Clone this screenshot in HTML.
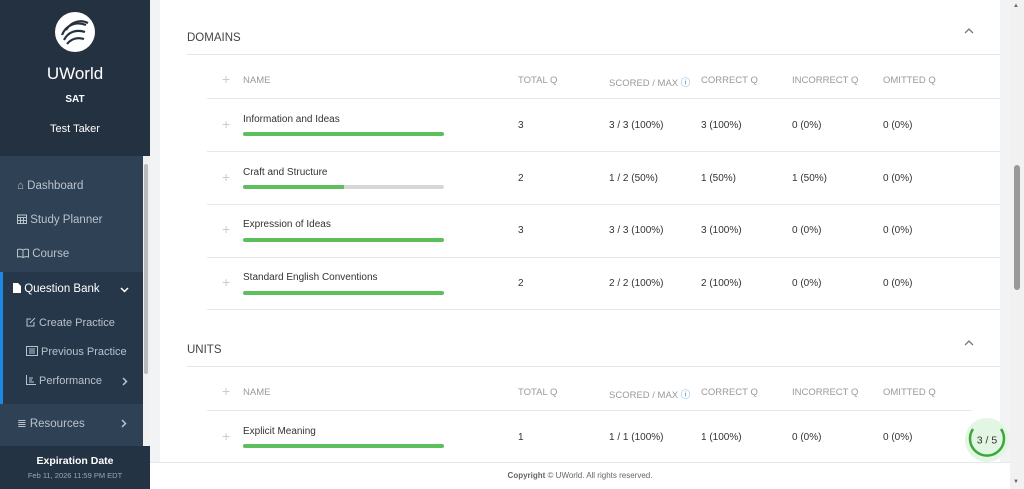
<!DOCTYPE html>
<html><head><meta charset="utf-8"><style>
*{margin:0;padding:0;box-sizing:border-box}
body{width:1024px;height:489px;overflow:hidden;font-family:"Liberation Sans",sans-serif;background:#f2f3f5;position:relative}
.sb{position:absolute;left:0;top:0;width:150px;height:489px;background:#2c3e50}
.sbtop{position:absolute;left:0;top:0;width:150px;height:156px;background:#233140;text-align:center;color:#fff}
.nav{position:absolute;left:0;top:156px;width:150px;height:290px;background:#2f4154}
.nav .it{position:absolute;left:17px;color:#b9c3cc;font-size:11.5px}
.qb{position:absolute;left:0;top:272px;width:143px;height:132px;background:#26374a;border-left:3px solid #1e88e5}
.sbs{position:absolute;left:143px;top:156px;width:7px;height:290px;background:#f0f0f0}
.sbbot{position:absolute;left:0;top:446px;width:150px;height:43px;background:#243344;text-align:center;color:#fff}
.card{position:absolute;left:160px;top:0;width:840px;height:462px;background:#fff}
.foot{position:absolute;left:150px;top:462px;width:860px;height:27px;background:#fff;border-top:1px solid #e6e8eb;font-size:8px;color:#666;text-align:center;line-height:26px}
.scr{position:absolute;left:1010px;top:0;width:14px;height:489px;background:#f1f1f1}
.t{position:absolute;font-size:10px;color:#333}
.h{position:absolute;font-size:9.5px;color:#999}
.ln{position:absolute;height:1px;background:#e8e8e8}
.bar{position:absolute;left:243px;width:201px;height:4px;border-radius:2px;background:#d6d6d6;overflow:hidden}
.bar i{display:block;height:100%;background:#5cbf5c}
.pl{position:absolute;left:222px;font-size:14px;color:#ccc;font-weight:300}
.sec{position:absolute;left:187px;font-size:11.5px;color:#444}
.car{position:absolute;left:964px}
.chev{position:absolute}
</style></head><body>
<div class="sb">
 <div class="sbtop">
  <svg style="position:absolute;left:54px;top:11px" width="42" height="42" viewBox="0 0 42 42"><circle cx="21" cy="21" r="20" fill="#fff"/><path d="M8 24c4-10 14-14 24-10M10 29c4-8 12-11 21-8M13 33c4-5 10-7 17-5M12 19c5-8 14-11 22-7" stroke="#233140" stroke-width="2.2" fill="none"/></svg>
  <div style="position:absolute;top:64px;width:150px;font-size:17px">UWorld</div>
  <div style="position:absolute;top:94px;width:150px;font-size:10px;font-weight:bold">SAT</div>
  <div style="position:absolute;top:123px;width:150px;font-size:11px">Test Taker</div>
 </div>
 <div class="nav">
  <div class="it" style="top:24px">⌂ Dashboard</div>
  <div class="it" style="top:58px"><svg width="10" height="10" viewBox="0 0 10 10" style="vertical-align:-1px"><rect x=".5" y="1" width="9" height="8.5" fill="none" stroke="#b9c3cc"/><path d="M.5 3.5h9M3.5 3.5v6M6.5 3.5v6M.5 6.5h9" stroke="#b9c3cc"/></svg> Study Planner</div>
  <div class="it" style="top:92px"><svg width="12" height="10" viewBox="0 0 12 10" style="vertical-align:-1px"><path d="M6 2C4 1 2 1 .5 1.5v7.5C2 8.5 4 8.5 6 9.5 8 8.5 10 8.5 11.5 9V1.5C10 1 8 1 6 2zM6 2v7.5" stroke="#b9c3cc" fill="none"/></svg> Course</div>
 </div>
 <div class="qb">
  <div style="position:absolute;left:10px;top:11px;color:#fff;font-size:11.5px"><svg width="8" height="10" viewBox="0 0 8 10" style="vertical-align:-1px"><path d="M0 0h5l3 3v7H0z" fill="#fff"/></svg> Question Bank</div>
  <svg class="chev" style="left:117px;top:15px" width="9" height="6" viewBox="0 0 9 6"><path d="M1 1l3.5 3.5L8 1" stroke="#fff" stroke-width="1.5" fill="none"/></svg>
  <div style="position:absolute;left:23px;top:45px;color:#b9c3cc;font-size:11px"><svg width="10" height="10" viewBox="0 0 10 10" style="vertical-align:-1px"><path d="M8 5v4H1V2h4M4 6l5-5" stroke="#b9c3cc" fill="none"/></svg> Create Practice</div>
  <div style="position:absolute;left:23px;top:74px;color:#b9c3cc;font-size:11px"><svg width="12" height="10" viewBox="0 0 12 10" style="vertical-align:-1px"><rect x=".5" y=".5" width="11" height="9" fill="none" stroke="#b9c3cc"/><path d="M3 3h6M3 5h6M3 7h6" stroke="#b9c3cc"/></svg> Previous Practice</div>
  <div style="position:absolute;left:23px;top:103px;color:#b9c3cc;font-size:11px"><svg width="10" height="10" viewBox="0 0 10 10" style="vertical-align:-1px"><path d="M.5 0v9.5H10M3 3h4M3 5h3M3 7h5" stroke="#b9c3cc" fill="none"/></svg> Performance</div>
  <svg class="chev" style="left:119px;top:105px" width="6" height="9" viewBox="0 0 6 9"><path d="M1 1l3.5 3.5L1 8" stroke="#b9c3cc" stroke-width="1.5" fill="none"/></svg>
 </div>
 <div style="position:absolute;left:17px;top:416px;color:#b9c3cc;font-size:11.5px">≣ Resources</div>
 <svg class="chev" style="left:121px;top:419px" width="6" height="9" viewBox="0 0 6 9"><path d="M1 1l3.5 3.5L1 8" stroke="#b9c3cc" stroke-width="1.5" fill="none"/></svg>
 <div class="sbs"><div style="position:absolute;left:1px;top:8px;width:4px;height:210px;background:#bbb;border-radius:2px"></div></div>
 <div class="sbbot">
  <div style="position:absolute;top:9px;width:150px;font-size:10.5px;font-weight:bold">Expiration Date</div>
  <div style="position:absolute;top:25px;width:150px;font-size:7.5px;color:#9aa6b2">Feb 11, 2026 11:59 PM EDT</div>
 </div>
</div>
<div class="card"></div>
<div class="sec" style="top:32px">DOMAINS</div><svg class="car" style="top:28px" width="10" height="6" viewBox="0 0 10 6"><path d="M1 5l4-4 4 4" stroke="#777" stroke-width="1.3" fill="none"/></svg>
<div class="ln" style="left:187px;width:813px;top:54px"></div>
<div class="pl" style="top:71px">+</div>
<div class="h" style="left:243px;top:75px">NAME</div><div class="h" style="left:518px;top:75px">TOTAL Q</div><div class="h" style="left:609px;top:75px">SCORED / MAX <span style="color:#3a8fd9">ⓘ</span></div><div class="h" style="left:701px;top:75px">CORRECT Q</div><div class="h" style="left:792px;top:75px">INCORRECT Q</div><div class="h" style="left:883px;top:75px">OMITTED Q</div>
<div class="ln" style="left:207px;width:793px;top:98px"></div>

<div class="pl" style="top:116px">+</div><div class="t" style="left:243px;top:114px">Information and Ideas</div><div class="bar" style="top:132px"><i style="width:100%"></i></div>
<div class="t" style="left:518px;top:120px">3</div><div class="t" style="left:609px;top:120px">3 / 3 (100%)</div><div class="t" style="left:701px;top:120px">3 (100%)</div><div class="t" style="left:792px;top:120px">0 (0%)</div><div class="t" style="left:883px;top:120px">0 (0%)</div>
<div class="ln" style="left:207px;width:793px;top:151px"></div>

<div class="pl" style="top:169px">+</div><div class="t" style="left:243px;top:167px">Craft and Structure</div><div class="bar" style="top:185px"><i style="width:50%"></i></div>
<div class="t" style="left:518px;top:173px">2</div><div class="t" style="left:609px;top:173px">1 / 2 (50%)</div><div class="t" style="left:701px;top:173px">1 (50%)</div><div class="t" style="left:792px;top:173px">1 (50%)</div><div class="t" style="left:883px;top:173px">0 (0%)</div>
<div class="ln" style="left:207px;width:793px;top:204px"></div>

<div class="pl" style="top:221px">+</div><div class="t" style="left:243px;top:219px">Expression of Ideas</div><div class="bar" style="top:238px"><i style="width:100%"></i></div>
<div class="t" style="left:518px;top:225px">3</div><div class="t" style="left:609px;top:225px">3 / 3 (100%)</div><div class="t" style="left:701px;top:225px">3 (100%)</div><div class="t" style="left:792px;top:225px">0 (0%)</div><div class="t" style="left:883px;top:225px">0 (0%)</div>
<div class="ln" style="left:207px;width:793px;top:257px"></div>

<div class="pl" style="top:274px">+</div><div class="t" style="left:243px;top:272px">Standard English Conventions</div><div class="bar" style="top:291px"><i style="width:100%"></i></div>
<div class="t" style="left:518px;top:278px">2</div><div class="t" style="left:609px;top:278px">2 / 2 (100%)</div><div class="t" style="left:701px;top:278px">2 (100%)</div><div class="t" style="left:792px;top:278px">0 (0%)</div><div class="t" style="left:883px;top:278px">0 (0%)</div>
<div class="ln" style="left:207px;width:793px;top:309px"></div>

<div class="sec" style="top:344px">UNITS</div><svg class="car" style="top:340px" width="10" height="6" viewBox="0 0 10 6"><path d="M1 5l4-4 4 4" stroke="#777" stroke-width="1.3" fill="none"/></svg>
<div class="ln" style="left:187px;width:813px;top:366px"></div>
<div class="pl" style="top:383px">+</div>
<div class="h" style="left:243px;top:387px">NAME</div><div class="h" style="left:518px;top:387px">TOTAL Q</div><div class="h" style="left:609px;top:387px">SCORED / MAX <span style="color:#3a8fd9">ⓘ</span></div><div class="h" style="left:701px;top:387px">CORRECT Q</div><div class="h" style="left:792px;top:387px">INCORRECT Q</div><div class="h" style="left:883px;top:387px">OMITTED Q</div>
<div class="ln" style="left:207px;width:765px;top:410px"></div>
<div class="pl" style="top:428px">+</div><div class="t" style="left:243px;top:426px">Explicit Meaning</div><div class="bar" style="top:444px"><i style="width:100%"></i></div>
<div class="t" style="left:518px;top:432px">1</div><div class="t" style="left:609px;top:432px">1 / 1 (100%)</div><div class="t" style="left:701px;top:432px">1 (100%)</div><div class="t" style="left:792px;top:432px">0 (0%)</div><div class="t" style="left:883px;top:432px">0 (0%)</div>

<svg style="position:absolute;left:964px;top:417px" width="46" height="46" viewBox="0 0 46 46"><circle cx="23" cy="23" r="22" fill="#e3f5e3"/><path d="M9 12 A17 17 0 1 0 37 12" stroke="#3da73d" stroke-width="2.5" fill="none"/><text x="23" y="26.5" font-size="10.5" text-anchor="middle" fill="#333" font-family="Liberation Sans">3 / 5</text></svg>

<div class="foot"><b>Copyright</b> © UWorld. All rights reserved.</div>
<div class="scr"><div style="position:absolute;left:4px;top:165px;width:6px;height:125px;background:#999;border-radius:3px"></div><div style="position:absolute;left:3px;top:3px;font-size:6px;color:#666">▲</div><div style="position:absolute;left:3px;top:479px;font-size:6px;color:#666">▼</div></div>
</body></html>
